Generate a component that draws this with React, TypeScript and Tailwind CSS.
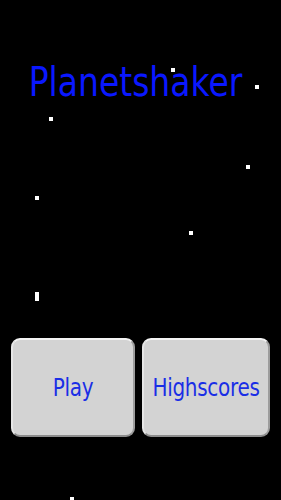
import React from 'react'

// 背景星星
const stars = [
  { id: 1, cls: 'left-[171px] top-[68px] w-1 h-1' },
  { id: 2, cls: 'left-[255px] top-[85px] w-1 h-1' },
  { id: 3, cls: 'left-[49px] top-[117px] w-1 h-1' },
  { id: 4, cls: 'left-[246px] top-[165px] w-1 h-1' },
  { id: 5, cls: 'left-[35px] top-[196px] w-1 h-1' },
  { id: 6, cls: 'left-[189px] top-[231px] w-1 h-1' },
  { id: 7, cls: 'left-[35px] top-[292px] w-1 h-[9px]' },
  { id: 8, cls: 'left-[70px] top-[497px] w-1 h-1' }
]

const MenuButton: React.FC<{ label: string; className: string }> = ({ label, className }) => {
  return (
    <button
      className={`${className} h-[99px] flex items-center justify-center rounded-[9px] bg-[#d3d3d3] border-2 border-t-[#f4f4f4] border-l-[#e6e6e6] border-b-[#8c8c8c] border-r-[#9c9c9c]`}
    >
      <span className="text-[20px] leading-none tracking-[-0.3px] text-[#1a2ee6] scale-y-[1.2] font-['DejaVu_Sans',sans-serif]">
        {label}
      </span>
    </button>
  )
}

export default function App() {
  return (
    <div className="relative w-[281px] h-[500px] overflow-hidden bg-black flex flex-col">
      {stars.map((s) => (
        <div key={s.id} className={`absolute bg-white ${s.cls}`} />
      ))}

      {/* 标题 */}
      <div className="pt-[64px] pr-[10px] flex justify-center">
        <h1 className="text-[33px] leading-[38px] text-[#0a18ff] scale-y-[1.22] font-['DejaVu_Sans',sans-serif]">
          Planetshaker
        </h1>
      </div>

      <div className="flex-1" />

      {/* 按钮 */}
      <div className="flex gap-[7px] pl-[11px] mb-[63px]">
        <MenuButton label="Play" className="w-[124px]" />
        <MenuButton label="Highscores" className="w-[128px]" />
      </div>
    </div>
  )
}
